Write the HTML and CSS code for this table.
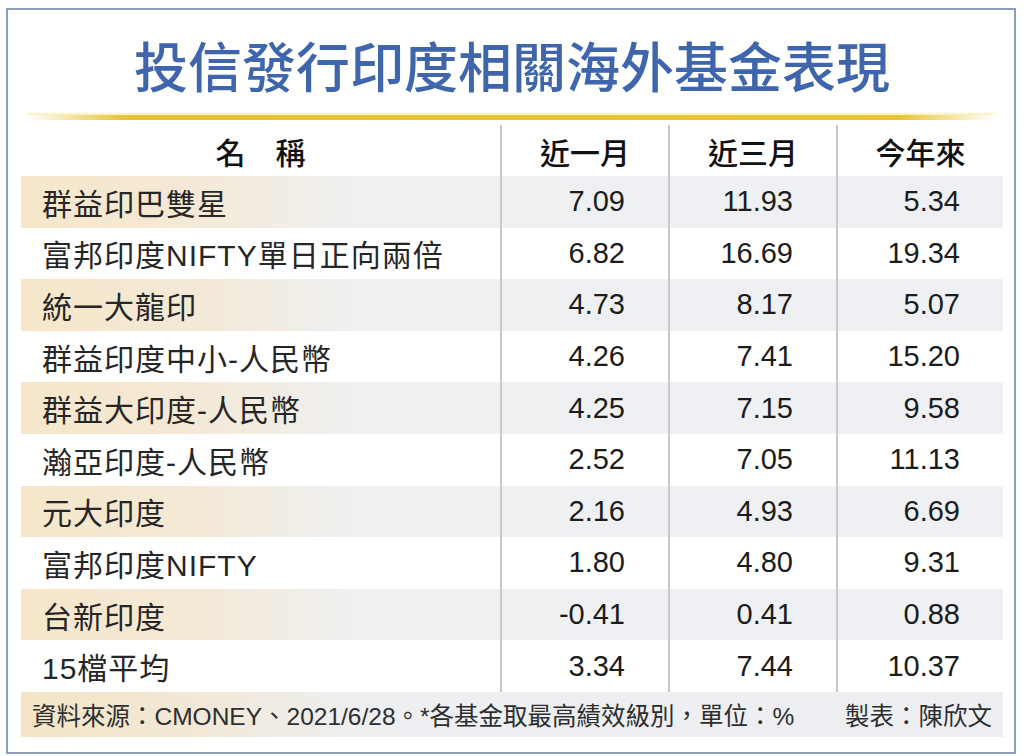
FILE: index.html
```html
<!DOCTYPE html>
<html lang="zh-Hant">
<head>
<meta charset="utf-8">
<title>投信發行印度相關海外基金表現</title>
<link rel="stylesheet" href="styles.css">
</head>
<body>
<div class="frame">
  <h1 class="title">投信發行印度相關海外基金表現</h1>
  <div class="rule"></div>
  <div class="table">
    <div class="row head">
      <div class="cell name">名　稱</div>
      <div class="cell num">近一月</div>
      <div class="cell num">近三月</div>
      <div class="cell num">今年來</div>
    </div>
    <div class="row stripe">
      <div class="cell name">群益印巴雙星</div>
      <div class="cell num">7.09</div>
      <div class="cell num">11.93</div>
      <div class="cell num">5.34</div>
    </div>
    <div class="row">
      <div class="cell name">富邦印度NIFTY單日正向兩倍</div>
      <div class="cell num">6.82</div>
      <div class="cell num">16.69</div>
      <div class="cell num">19.34</div>
    </div>
    <div class="row stripe">
      <div class="cell name">統一大龍印</div>
      <div class="cell num">4.73</div>
      <div class="cell num">8.17</div>
      <div class="cell num">5.07</div>
    </div>
    <div class="row">
      <div class="cell name">群益印度中小-人民幣</div>
      <div class="cell num">4.26</div>
      <div class="cell num">7.41</div>
      <div class="cell num">15.20</div>
    </div>
    <div class="row stripe">
      <div class="cell name">群益大印度-人民幣</div>
      <div class="cell num">4.25</div>
      <div class="cell num">7.15</div>
      <div class="cell num">9.58</div>
    </div>
    <div class="row">
      <div class="cell name">瀚亞印度-人民幣</div>
      <div class="cell num">2.52</div>
      <div class="cell num">7.05</div>
      <div class="cell num">11.13</div>
    </div>
    <div class="row stripe">
      <div class="cell name">元大印度</div>
      <div class="cell num">2.16</div>
      <div class="cell num">4.93</div>
      <div class="cell num">6.69</div>
    </div>
    <div class="row">
      <div class="cell name">富邦印度NIFTY</div>
      <div class="cell num">1.80</div>
      <div class="cell num">4.80</div>
      <div class="cell num">9.31</div>
    </div>
    <div class="row stripe">
      <div class="cell name">台新印度</div>
      <div class="cell num">-0.41</div>
      <div class="cell num">0.41</div>
      <div class="cell num">0.88</div>
    </div>
    <div class="row">
      <div class="cell name">15檔平均</div>
      <div class="cell num">3.34</div>
      <div class="cell num">7.44</div>
      <div class="cell num">10.37</div>
    </div>
  </div>
  <div class="footer">
    <span>資料來源：CMONEY、2021/6/28。*各基金取最高績效級別，單位：%</span>
    <span>製表：陳欣文</span>
  </div>
</div>
</body>
</html>
```

FILE: styles.css
```css
html, body {
  margin: 0;
  padding: 0;
  background: #ffffff;
}

body {
  font-family: "Liberation Sans", "Noto Sans CJK TC", sans-serif;
  color: #1e1e1e;
}

.frame {
  box-sizing: border-box;
  width: 1010px;
  height: 746px;
  margin: 8px 0 0 6px;
  border: 2px solid #8e9dbd;
  padding: 25px 11px 0 13px;
  display: flex;
  flex-direction: column;
}

.title {
  margin: 0;
  height: 60px;
  line-height: 60px;
  text-align: center;
  font-family: "Noto Sans CJK TC", sans-serif;
  font-size: 54px;
  font-weight: 500;
  color: #3f66ad;
  letter-spacing: 0;
}

.rule {
  height: 5px;
  margin: 20px 8px 0 7px;
  background: linear-gradient(to right, rgba(233, 196, 50, 0) 0%, #e7c234 10%, #e9c332 90%, rgba(233, 196, 50, 0) 100%);
  box-shadow: 0 -2px 2px rgba(245, 225, 130, 0.5);
}

.table {
  margin-top: 5px;
  display: flex;
  flex-direction: column;
}

.row {
  display: grid;
  grid-template-columns: 479px 168px 168px 167px;
  height: 51.6px;
}

.row.head {
  height: 51px;
}

.row.stripe {
  background: linear-gradient(to right, #f6e7ca 0px, #f4e9d6 170px, #eff0f2 340px, #eef0f3 100%);
}

.cell {
  display: flex;
  align-items: center;
  font-size: 29px;
  white-space: nowrap;
}

.cell.name {
  padding-left: 21px;
  font-size: 30px;
  letter-spacing: 1px;
  color: #262626;
}

.cell.num {
  justify-content: flex-end;
  padding-right: 43px;
  border-left: 2px solid #c9c9c9;
  color: #1c1c1c;
}

.row.head .cell {
  font-family: "Noto Sans CJK TC", sans-serif;
  font-size: 30px;
  font-weight: 500;
  letter-spacing: 0;
  color: #111111;
  justify-content: center;
  padding: 0;
}

.footer {
  height: 45px;
  display: flex;
  align-items: center;
  justify-content: space-between;
  padding: 0 11px 0 11px;
  font-size: 24.5px;
  color: #2e2e2e;
  background: linear-gradient(to right, #f5e5c6 0px, #f2e8d6 170px, #eeeff1 340px, #eceef2 100%);
}
```
